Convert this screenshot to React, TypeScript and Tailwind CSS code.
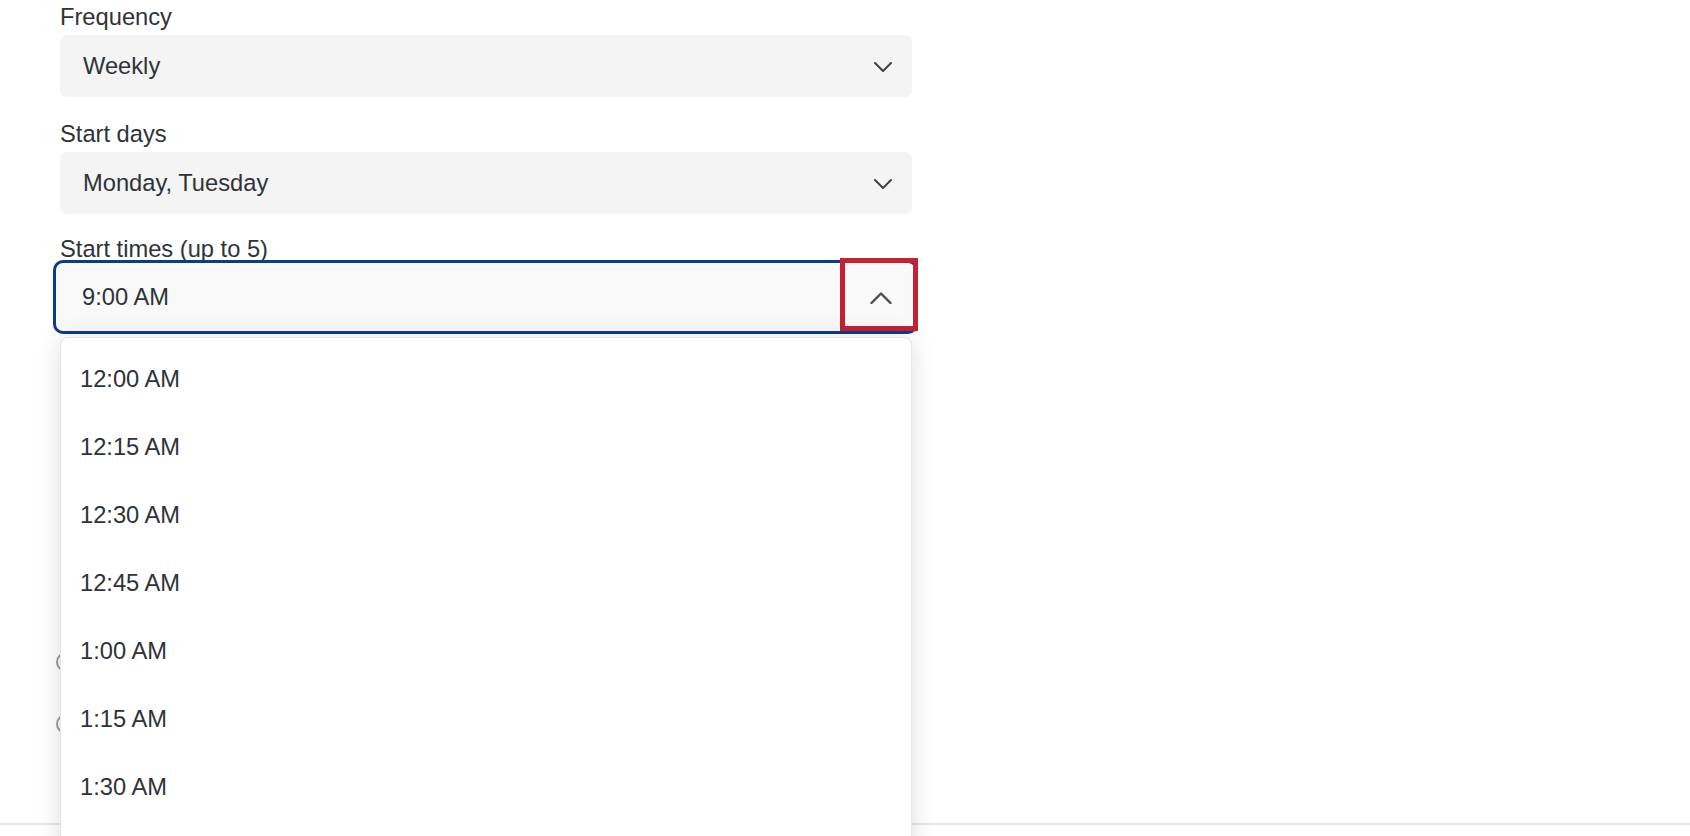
import { ReactNode } from "react";

const times = [
  "12:00 AM",
  "12:15 AM",
  "12:30 AM",
  "12:45 AM",
  "1:00 AM",
  "1:15 AM",
  "1:30 AM",
];

function ChevronDown() {
  return (
    <svg width="18" height="10" viewBox="0 0 18 10" fill="none">
      <path
        d="M1 1 L9 9 L17 1"
        stroke="#3f4246"
        strokeWidth="2"
        strokeLinecap="round"
        strokeLinejoin="round"
      />
    </svg>
  );
}

function ChevronUp() {
  return (
    <svg width="22" height="12" viewBox="0 0 22 12" fill="none">
      <path
        d="M1.5 11 L11 1.5 L20.5 11"
        stroke="#4a4d51"
        strokeWidth="2.4"
        strokeLinecap="round"
        strokeLinejoin="round"
      />
    </svg>
  );
}

function Label({ children }: { children: ReactNode }) {
  return <div className="h-[28px] leading-[28px] text-[23.7px]">{children}</div>;
}

function Select({ value }: { value: string }) {
  return (
    <div className="flex h-[62px] items-center justify-between rounded-[7px] bg-[#f4f4f4] pl-[23px] pr-[20px] pt-[2px] text-[23.7px]">
      <span>{value}</span>
      <ChevronDown />
    </div>
  );
}

export default function App() {
  return (
    <div className="relative h-[836px] w-full overflow-hidden bg-white font-['Liberation_Sans',Arial,sans-serif] text-[#2f3337]">
      <div className="ml-[60px] flex w-[852px] flex-col pt-[3px]">
        <Label>Frequency</Label>
        <div className="mt-[4px]">
          <Select value="Weekly" />
        </div>

        <div className="mt-[23px]">
          <Label>Start days</Label>
        </div>
        <div className="mt-[4px]">
          <Select value="Monday, Tuesday" />
        </div>

        <div className="mt-[21px]">
          <Label>Start times (up to 5)</Label>
        </div>
        <div className="relative -ml-[7px] -mt-[3px] flex h-[74px] w-[865px] items-center justify-between rounded-[10px] border-[3px] border-[#0b3c8c] bg-[#f9f9f9] pl-[26px] pr-[23px] pt-[1px] text-[23.7px]">
          <span>9:00 AM</span>
          <ChevronUp />
          <div className="absolute -top-[5px] left-[784px] h-[73px] w-[78px] border-[5px] border-[#c32232]" />
        </div>

        <div className="mt-[318px] flex flex-col gap-[42px]">
          <div className="-ml-[4px] h-[20px] w-[20px] rounded-full border-2 border-[#9a9a9a]" />
          <div className="-ml-[4px] h-[20px] w-[20px] rounded-full border-2 border-[#9a9a9a]" />
        </div>
      </div>

      <div className="mt-[89px] h-[2px] w-full bg-[#e6e6e6]" />

      <div className="absolute left-[60px] top-[337px] h-[560px] w-[852px] rounded-[8px] border border-[#e4e4e4] bg-white pt-[8px] shadow-[0_2px_26px_rgba(0,0,0,0.13)]">
        {times.map((t) => (
          <div key={t} className="flex h-[68px] items-center pl-[19px] text-[23.7px]">
            {t}
          </div>
        ))}
      </div>
    </div>
  );
}
